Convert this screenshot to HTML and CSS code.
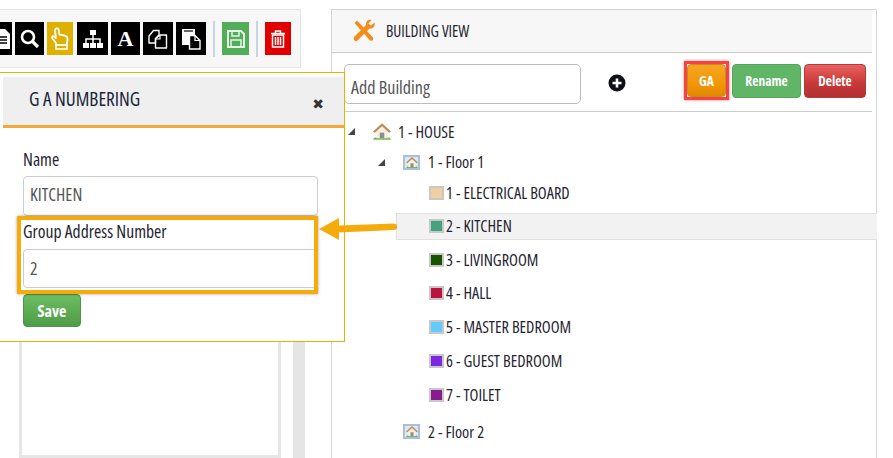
FILE: index.html
```html
<!DOCTYPE html>
<html lang="en">
<head>
<meta charset="utf-8">
<title>Building View</title>
<link rel="stylesheet" href="styles.css">
</head>
<body>
<svg class="defs" width="0" height="0">
  <defs>
    <symbol id="house" viewBox="0 0 24 22">
      <path d="M2 19h20l2 3H0z" fill="#7ab648"/>
      <path d="M4.500 10L12 4l7.500 6v10h-15z" fill="#f6efe2"/>
      <path d="M9 12.500h6V20H9z" fill="#8a8f94"/>
      <path d="M0 11L12 0l12 11-2.500 1.500L12 4 2.500 12.500z" fill="#bf8c58"/>
    </symbol>
  </defs>
</svg>
<div class="page">
  <div class="left">
    <div class="toolbar">
      <span class="tool black w-doc">
        <svg width="13" height="22" viewBox="5 0 13 22"><path d="M2 1h9l5 5v15H2z" fill="#fff"/><path d="M5 9h8M5 12h8M5 15h8" stroke="#000" stroke-width="1.500"/></svg>
      </span>
      <span class="tool black w-search">
        <svg width="20" height="20" viewBox="0 0 20 20"><circle cx="8" cy="8" r="6" fill="none" stroke="#fff" stroke-width="2.600"/><path d="M12.500 12.500L18 18" stroke="#fff" stroke-width="3.200"/></svg>
      </span>
      <span class="tool gold w-hand">
        <svg width="18" height="23" viewBox="0 0 18 23"><path d="M4.500 2c1.200-1.200 3-.6 3.200 1l.6 4.500 4.500.8c2.500.5 3.700 1.600 3.700 3.700 0 2.500-.6 4.200-1 6H5.500L4.300 15 1.500 11.500C.4 10 2 8.500 3.300 9.500l1.700 1.500-1-6.800C3.900 3.400 4 2.600 4.500 2z" fill="none" stroke="#fff" stroke-width="1.800" stroke-linejoin="round"/><path d="M5 18h11v4H5z" fill="none" stroke="#fff" stroke-width="1.600"/></svg>
      </span>
      <span class="tool black w-map">
        <svg width="22" height="20" viewBox="0 0 22 20"><path d="M8 1h6v5H8zM1 14h6v5H1zM8 14h6v5H8zM15 14h6v5h-6z" fill="#fff"/><path d="M11 6v8M4 14v-4h14v4" fill="none" stroke="#fff" stroke-width="1.500"/></svg>
      </span>
      <span class="tool black w-font">
        <span class="serif-a">A</span>
      </span>
      <span class="tool black w-copy">
        <svg width="20" height="20" viewBox="0 0 20 20"><path d="M1 7l4.500-5.500H11V6L7.500 9.500V14H1z" fill="none" stroke="#fff" stroke-width="1.400" stroke-linejoin="round"/><path d="M7.500 10L12 6h6.500v13h-11z" fill="none" stroke="#fff" stroke-width="1.400" stroke-linejoin="round"/><path d="M7.500 10H12V6" fill="none" stroke="#fff" stroke-width="1.200"/></svg>
      </span>
      <span class="tool black w-paste">
        <svg width="20" height="22" viewBox="0 0 20 22"><path d="M1 1h13v6H8v10H1z" fill="#fff"/><path d="M3 3h9" stroke="#000" stroke-width="1.200"/><path d="M8.500 7.500h5.500l5 5v8.500H8.500z" fill="#000" stroke="#fff" stroke-width="1.400"/><path d="M14 7.500v5h5" fill="none" stroke="#fff" stroke-width="1.200"/></svg>
      </span>
      <span class="sep"></span>
      <span class="tool green w-save">
        <svg width="18" height="18" viewBox="0 0 18 18"><path d="M1 1h13l3 3v13H1z" fill="none" stroke="#e6f3e6" stroke-width="2"/><path d="M5 1h7v5H5zM4 10h10v7H4z" fill="none" stroke="#e6f3e6" stroke-width="1.500"/></svg>
      </span>
      <span class="sep"></span>
      <span class="tool red w-trash">
        <svg width="16" height="18" viewBox="0 0 16 18"><path d="M1 3.500h14M5.500 3V1h5v2" fill="none" stroke="#fff" stroke-width="1.500"/><path d="M2.500 5h11v12h-11z" fill="none" stroke="#fff" stroke-width="1.500"/><path d="M5.500 7v8M8 7v8M10.500 7v8" stroke="#fff" stroke-width="1.500"/></svg>
      </span>
    </div>
    <div class="lower">
      <div class="canvas-box"></div>
      <div class="side-bar"></div>
    </div>
  </div>

  <section class="panel">
    <header class="panel-head">
      <svg class="wrench" width="24" height="24" viewBox="0 0 24 24"><path d="M2.500 4L5 1.500l8 8.500 8 8.500a2.200 2.200 0 0 1-3 3l-7.500-8.500z" fill="#f28c1b"/><path d="M22.500 3.500l-3.500 3-2.500-2 3-3.500c-3-1-6 1.500-5.500 5L2 18c-1.500 2 1.500 5.500 3.500 3.500L17.500 9.500c3.500.8 6-2.500 5-6z" fill="#f28c1b"/></svg>
      <span class="panel-title">BUILDING VIEW</span>
    </header>
    <div class="actions">
      <div class="add-input">Add Building</div>
      <svg class="plus" width="18" height="18" viewBox="0 0 18 18"><circle cx="9" cy="9" r="8.500" fill="#0d1117"/><path d="M9 4.500v9M4.500 9h9" stroke="#fff" stroke-width="2.600"/></svg>
      <div class="btn-group">
        <span class="ga-frame"><span class="btn btn-orange btn-ga">GA</span></span>
        <span class="btn btn-green btn-rename">Rename</span>
        <span class="btn btn-red btn-delete">Delete</span>
      </div>
    </div>
    <ul class="tree">
      <li class="row row-house"><span class="caret"></span><svg class="house" width="18" height="17"><use href="#house"/></svg><span>1 - HOUSE</span></li>
      <li class="row row-floor"><span class="caret"></span><span class="floor-icon"><svg width="12" height="11"><use href="#house"/></svg></span><span>1 - Floor 1</span></li>
      <li class="row row-room"><span class="swatch s1"></span><span>1 - ELECTRICAL BOARD</span></li>
      <li class="row row-room selected"><span class="swatch s2"></span><span>2 - KITCHEN</span></li>
      <li class="row row-room"><span class="swatch s3"></span><span>3 - LIVINGROOM</span></li>
      <li class="row row-room"><span class="swatch s4"></span><span>4 - HALL</span></li>
      <li class="row row-room"><span class="swatch s5"></span><span>5 - MASTER BEDROOM</span></li>
      <li class="row row-room"><span class="swatch s6"></span><span>6 - GUEST BEDROOM</span></li>
      <li class="row row-room"><span class="swatch s7"></span><span>7 - TOILET</span></li>
      <li class="row row-floor row-floor2"><span class="floor-icon"><svg width="12" height="11"><use href="#house"/></svg></span><span>2 - Floor 2</span></li>
    </ul>
  </section>

  <div class="modal">
    <div class="modal-head">
      <span class="modal-title">G A NUMBERING</span>
      <span class="modal-close">&#10006;</span>
    </div>
    <div class="modal-body">
      <label class="field-label">Name</label>
      <div class="field-input">KITCHEN</div>
      <label class="field-label label-ga">Group Address Number</label>
      <div class="field-input input-ga">2</div>
      <span class="btn btn-green btn-save">Save</span>
      <div class="highlight"></div>
    </div>
  </div>
  <svg class="arrow" width="78" height="22" viewBox="0 0 78 22"><path d="M0 11L20 0v7.500l55-2a3 3 0 0 1 0 6.500L20 14.500V22z" fill="#f6ab0c"/></svg>
</div>
</body>
</html>
```
FILE: styles.css
```css
* { box-sizing: border-box; }
html, body { margin: 0; padding: 0; background: #fff; }
body { font-family: "Open Sans", "Liberation Sans", sans-serif; font-stretch: 75%; color: #1f2430; }
.defs { position: absolute; }
.page { position: relative; display: flex; width: 893px; height: 458px; overflow: hidden; }

.left { width: 331px; flex: none; padding-top: 9px; }
.toolbar { display: flex; align-items: center; width: 321px; height: 59px; margin-left: -20px; padding-left: 20px; background: #f7f7f7; border: 1px solid #e4e4e4; }
.tool { display: flex; align-items: center; justify-content: center; height: 33px; flex: none; }
.black { background: #000; margin-right: 3px; }
.gold { background: #e0b000; }
.green { background: #51ad58; }
.red { background: #e00000; }
.w-doc { width: 32px; margin-left: -21px; justify-content: flex-end; }
.w-search { width: 29px; }
.w-hand { width: 26px; margin-right: 4px; }
.w-map { width: 31px; }
.w-font { width: 29px; }
.w-copy { width: 30px; }
.w-paste { width: 30px; margin-right: 0; }
.w-save { width: 27px; }
.w-trash { width: 26px; }
.serif-a { font: bold 22px "Liberation Serif", serif; color: #fff; }
.sep { width: 2px; height: 36px; margin: 0 7px; background: #c9d4e2; flex: none; }

.lower { display: flex; margin-top: 13px; height: 377px; }
.canvas-box { width: 262px; margin-left: 19px; background: #fff; border: 3px solid #e6e6e6; }
.side-bar { width: 12px; margin-left: 12px; background: #e5e5e5; }

.panel { width: 546px; flex: none; height: 449px; margin-top: 9px; border: 1px solid #d4d4d4; border-bottom: 0; }
.panel-head { display: flex; align-items: center; gap: 10px; width: 540px; height: 43px; padding-left: 20px; background: #f7f7f7; border-bottom: 1px solid #ccc; }
.panel-title { font-size: 15.500px; color: #1f2430; }
.actions { display: flex; align-items: flex-start; width: 540px; height: 59px; padding-top: 11px; padding-left: 12px; border-bottom: 1px solid #ccc; }
.add-input { width: 237px; height: 40px; padding-left: 6px; font-size: 18px; line-height: 44px; color: #555; background: #fff; border: 1px solid #bbb; border-radius: 5px; }
.plus { margin: 10px 0 0 27px; }
.btn-group { display: flex; align-items: center; gap: 3px; margin-left: 58px; margin-top: -3px; }
.btn { display: inline-flex; align-items: center; justify-content: center; height: 34px; border-radius: 4px; font-size: 13.500px; font-weight: 700; color: #fff; }
.ga-frame { display: block; width: 45px; height: 39px; border: 3px solid #f64242; box-shadow: 0 0 3px #f88; }
.btn-orange { background: linear-gradient(#f5a623, #f09400 70%, #dd8a00); border: 1px solid #c98a22; }
.btn-ga { width: 39px; height: 33px; }
.btn-green { background: #60b566; border: 1px solid #54a35a; }
.btn-rename { width: 69px; }
.btn-red { background: linear-gradient(#e96060, #c93a3a 55%, #b43030); border: 1px solid #b23a3a; }
.btn-delete { width: 62px; }

.tree { list-style: none; margin: 0; padding: 3px 0 0; font-size: 16.300px; color: #1f2430; }
.row { display: flex; align-items: center; height: 33.800px; }
.row-house { height: 33px; padding-left: 16px; }
.row-house .caret { margin-right: 18px; }
.row-house .house { margin-right: 7px; }
.row-floor { height: 28px; padding-left: 46px; }
.row-floor .caret { margin-right: 18px; }
.caret { width: 0; height: 0; border-style: solid; border-width: 0 0 7px 7px; border-color: transparent transparent #444 transparent; flex: none; }
.floor-icon { display: flex; align-items: center; justify-content: center; width: 17px; height: 15px; margin-right: 8px; background: #dfe8f3; border: 2px solid #a9bfdc; flex: none; }
.row-floor2 { height: 40px; padding-left: 71px; }
.row-room { padding-left: 97px; }
.swatch { width: 15px; height: 14px; margin-right: 2px; border: 2px solid #c8c8c8; flex: none; }
.s1 { background: #f2cfa0; }
.s2 { background: #45a27f; }
.s3 { background: #1a5300; }
.s4 { background: #bb1340; }
.s5 { background: #5fcbff; }
.s6 { background: #7f28e2; }
.s7 { background: #881b8f; }
.selected { margin-left: 64px; padding-left: 32px; height: 27px; margin-top: 3px; margin-bottom: 3px; width: 481px; background: #f3f2f2; border: 1px solid #e0e0e0; border-right: 0; }

.modal { position: absolute; left: -1px; top: 72px; width: 346px; height: 270px; background: #fff; border: 1px solid #e8b100; padding-top: 4px; }
.modal-head { display: flex; align-items: center; justify-content: space-between; margin-left: 3px; height: 51px; padding: 0 20px 0 26px; background: #efefef; border-bottom: 3px solid #f4a935; }
.modal-title { font-size: 19.200px; color: #20263a; padding-bottom: 5px; }
.modal-close { font: 14px "DejaVu Sans", sans-serif; color: #333; padding-top: 6px; }
.modal-body { position: relative; padding: 21px 26px 0 23px; }
.field-label { display: block; font-size: 17.600px; line-height: 20px; }
.field-input { height: 40px; margin-top: 7px; padding-left: 6px; font-size: 17.600px; line-height: 34px; color: #555; background: #fff; border: 1px solid #ccc; border-radius: 4px; }
.label-ga { margin-top: 5px; }
.input-ga { height: 39px; margin-top: 8px; line-height: 36px; }
.btn-save { width: 58px; height: 33px; margin-top: 6px; font-size: 16px; background: linear-gradient(#6cbe62, #4e9b47); border-color: #4e9550; }
.highlight { position: absolute; left: 17px; top: 88px; width: 301px; height: 78px; border: 4px solid #f6ab0c; box-shadow: 0 0 3px rgba(0,0,0,.35); }
.arrow { position: absolute; left: 319px; top: 218px; }
```
